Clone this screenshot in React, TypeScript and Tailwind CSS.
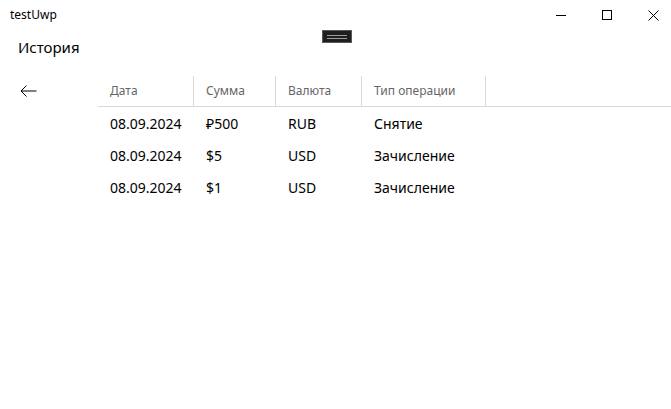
import React from 'react';

const rows = [
  { date: '08.09.2024', sum: '₽500', cur: 'RUB', type: 'Снятие' },
  { date: '08.09.2024', sum: '$5', cur: 'USD', type: 'Зачисление' },
  { date: '08.09.2024', sum: '$1', cur: 'USD', type: 'Зачисление' },
];

const cols = [
  { label: 'Дата', w: 'w-[96px]' },
  { label: 'Сумма', w: 'w-[82px]' },
  { label: 'Валюта', w: 'w-[86px]' },
  { label: 'Тип операции', w: 'w-[124px]' },
];

export default function App() {
  return (
    <div className="relative w-[671px] h-[409px] bg-white text-black overflow-hidden font-['Noto_Sans',sans-serif]">
      {/* Title bar */}
      <div className="flex h-[30px] items-center">
        <span className="pl-[10px] text-[12px] leading-none">testUwp</span>
        <div className="ml-auto mr-[-5px] flex h-full">
          <button className="flex w-[46px] items-center justify-center">
            <span className="block w-[10px] h-px bg-black" />
          </button>
          <button className="flex w-[46px] items-center justify-center">
            <span className="block w-[10px] h-[10px] border border-black" />
          </button>
          <button className="flex w-[46px] items-center justify-center">
            <svg width="11" height="11" viewBox="0 0 11 11">
              <path d="M0.5 0.5 L10.5 10.5 M10.5 0.5 L0.5 10.5" stroke="#000" strokeWidth="1" />
            </svg>
          </button>
        </div>
      </div>

      {/* drag handle */}
      <div className="absolute left-[322px] top-[30px] flex h-[13px] w-[30px] flex-col items-center justify-center gap-[2px] border border-[#5a5a5a] bg-[#1f1f1f]">
        <span className="block h-px w-[20px] bg-[#9a9a9a]" />
        <span className="block h-px w-[20px] bg-[#9a9a9a]" />
      </div>

      {/* Header */}
      <div className="pl-[18px] pt-[7px] text-[15px] leading-[20px]">История</div>

      <div className="flex mt-[19px]">
        <div className="w-[98px] pl-[20px] pt-[9px]">
          <svg width="17" height="12" viewBox="0 0 17 12">
            <path d="M16.5 6 H1 M6.5 0.5 L1 6 L6.5 11.5" fill="none" stroke="#000" strokeWidth="1" />
          </svg>
        </div>
        <div className="flex-1">
          <div className="flex h-[31px] border-b border-[#d9d9d9]">
            {cols.map((c) => (
              <div
                key={c.label}
                className={`${c.w} flex items-center pl-[12px] border-r border-[#d9d9d9] text-[12px] text-[#666]`}
              >
                {c.label}
              </div>
            ))}
          </div>
          {rows.map((r, i) => (
            <div key={i} className="flex h-[32px] items-center text-[14px]">
              <div className="w-[96px] pl-[12px]">{r.date}</div>
              <div className="w-[82px] pl-[12px]">{r.sum}</div>
              <div className="w-[86px] pl-[12px]">{r.cur}</div>
              <div className="w-[124px] pl-[12px]">{r.type}</div>
            </div>
          ))}
        </div>
      </div>
    </div>
  );
}
